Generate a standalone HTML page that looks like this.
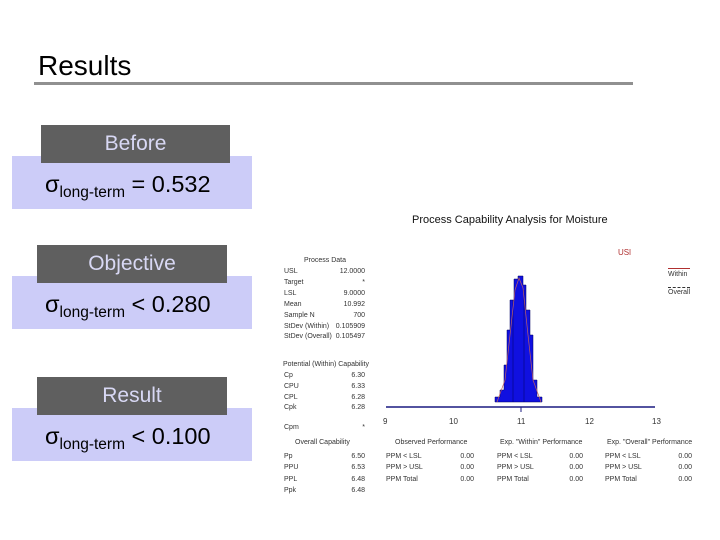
<!DOCTYPE html>
<html><head><meta charset="utf-8"><style>
body{margin:0;width:720px;height:540px;background:#fff;position:relative;overflow:hidden;font-family:"Liberation Sans",sans-serif}
.a{position:absolute;white-space:nowrap}
.dk{position:absolute;background:#5f5f5f;color:#d8d8f4;font-size:21px;text-align:center;line-height:38px}
.lv{position:absolute;background:#ccccf8;left:12px;width:240px;height:53px}
.sg{position:absolute;left:33px;top:15px;font-size:23.5px;color:#000}
.sg sub{font-size:15.5px;vertical-align:-5px}
.t{position:absolute;font-size:7px;color:#333;white-space:nowrap;line-height:8px}
</style></head><body>
<div class="a" style="left:38px;top:50px;font-size:28px;color:#000">Results</div>
<div class="a" style="left:34px;top:82px;width:599px;height:3px;background:#909090"></div>

<div class="lv" style="top:156px"><div class="sg">σ<sub>long-term</sub> = 0.532</div></div>
<div class="dk" style="left:41px;top:125px;width:189px">Before</div>
<div class="lv" style="top:276px"><div class="sg">σ<sub>long-term</sub> &lt; 0.280</div></div>
<div class="dk" style="left:37px;top:245px;width:190px">Objective</div>
<div class="lv" style="top:408px"><div class="sg">σ<sub>long-term</sub> &lt; 0.100</div></div>
<div class="dk" style="left:37px;top:377px;width:190px">Result</div>

<div class="a" style="left:412px;top:214px;font-size:11px;color:#111">Process Capability Analysis for Moisture</div>
<div class="t" style="left:618px;top:249px;color:#b03030;font-size:8px">USl</div>
<div class="t" style="left:668px;top:271px">Within</div>
<div class="t" style="left:668px;top:289px">Overall</div>
<div class="a" style="left:668px;top:268px;width:22px;height:1px;background:#b03030"></div>
<div class="a" style="left:668px;top:287px;width:22px;border-top:1px dashed #333"></div>

<div class="t" style="left:304px;top:257px">Process Data</div>
<div class="t" style="left:284px;top:267px;line-height:10.9px">USL<br>Target<br>LSL<br>Mean<br>Sample N<br>StDev (Within)<br>StDev (Overall)</div>
<div class="t" style="left:325px;top:267px;width:40px;text-align:right;line-height:10.9px">12.0000<br>*<br>9.0000<br>10.992<br>700<br>0.105909<br>0.105497</div>
<div class="t" style="left:283px;top:361px">Potential (Within) Capability</div>
<div class="t" style="left:284px;top:371px;line-height:10.8px">Cp<br>CPU<br>CPL<br>Cpk</div>
<div class="t" style="left:325px;top:371px;width:40px;text-align:right;line-height:10.8px">6.30<br>6.33<br>6.28<br>6.28</div>
<div class="t" style="left:284px;top:424px">Cpm</div>
<div class="t" style="left:325px;top:424px;width:40px;text-align:right">*</div>

<svg class="a" style="left:0;top:0" width="720" height="540">
<line x1="386" y1="407" x2="655" y2="407" stroke="#1a1a80" stroke-width="1.5"/>
<line x1="521" y1="407" x2="521" y2="412" stroke="#1a1a80"/>
<polygon points="495,402 495,397 500,397 500,390 504,390 504,365 507,365 507,330 510,330 510,300 514,300 514,279 518,279 518,276 523,276 523,285 526,285 526,310 530,310 530,335 533,335 533,380 537,380 537,397 542,397 542,402" fill="#1010e0" stroke="#000060" stroke-width="0.5"/>
<line x1="513" y1="300" x2="513" y2="402" stroke="#000060" stroke-width="0.5"/>
<line x1="524" y1="290" x2="524" y2="402" stroke="#000060" stroke-width="0.5"/>
<polyline points="497,402 505,380 510,335 515,290 519,278 523,288 528,335 533,380 541,402" fill="none" stroke="#c06060" stroke-width="0.7"/>
</svg>
<div class="t" style="left:383px;top:418px;font-size:8px">9</div>
<div class="t" style="left:449px;top:418px;font-size:8px">10</div>
<div class="t" style="left:517px;top:418px;font-size:8px">11</div>
<div class="t" style="left:585px;top:418px;font-size:8px">12</div>
<div class="t" style="left:652px;top:418px;font-size:8px">13</div>

<div class="t" style="left:295px;top:439px">Overall Capability</div>
<div class="t" style="left:284px;top:451px;line-height:11.4px">Pp<br>PPU<br>PPL<br>Ppk</div>
<div class="t" style="left:325px;top:451px;width:40px;text-align:right;line-height:11.4px">6.50<br>6.53<br>6.48<br>6.48</div>

<div class="t" style="left:395px;top:439px">Observed Performance</div>
<div class="t" style="left:386px;top:451px;line-height:11.4px">PPM &lt; LSL<br>PPM &gt; USL<br>PPM Total</div>
<div class="t" style="left:444px;top:451px;width:30px;text-align:right;line-height:11.4px">0.00<br>0.00<br>0.00</div>

<div class="t" style="left:500px;top:439px">Exp. "Within" Performance</div>
<div class="t" style="left:497px;top:451px;line-height:11.4px">PPM &lt; LSL<br>PPM &gt; USL<br>PPM Total</div>
<div class="t" style="left:553px;top:451px;width:30px;text-align:right;line-height:11.4px">0.00<br>0.00<br>0.00</div>

<div class="t" style="left:607px;top:439px">Exp. "Overall" Performance</div>
<div class="t" style="left:605px;top:451px;line-height:11.4px">PPM &lt; LSL<br>PPM &gt; USL<br>PPM Total</div>
<div class="t" style="left:662px;top:451px;width:30px;text-align:right;line-height:11.4px">0.00<br>0.00<br>0.00</div>
</body></html>
